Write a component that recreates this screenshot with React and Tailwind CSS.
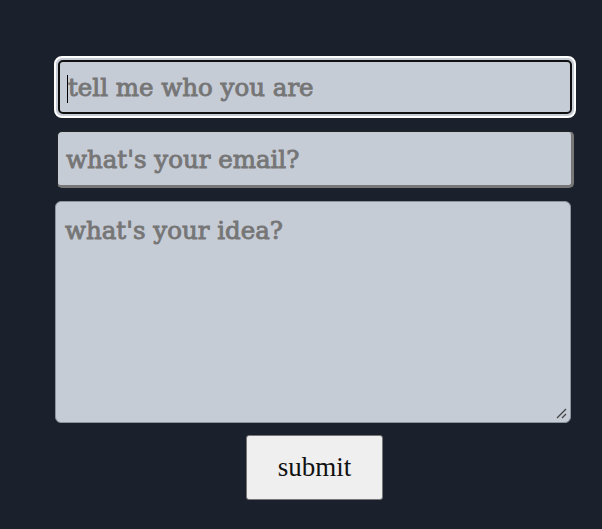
export default function App() {
  const ph = { WebkitTextStroke: '0.9px #767676' };
  return (
    <div className="min-h-[529px] bg-[#1a202c] pt-[56px] pl-[55px]" style={{ fontFamily: '"DejaVu Serif", serif' }}>
      <form className="w-[521px] flex flex-col items-center">
        <div className="self-start ml-[-1px] w-[522px] h-[62px] rounded-[8px] border-2 border-white p-[2px] bg-[#c6ccd6]">
          <div className="h-full rounded-[5px] border-2 border-[#101010] flex items-center pl-[7px] pt-[3px]">
            <span className="w-px h-[28px] bg-black" />
            <span className="text-[24.5px] text-[#767676]" style={ph}>tell me who you are</span>
          </div>
        </div>
        <div className="mt-[13px] self-start ml-[2px] w-[517px] h-[57px] rounded-[5px] bg-[#c6ccd6] border-t border-l border-t-[#222] border-l-[#222] border-b-[3px] border-r-[3px] border-b-[#777] border-r-[#777] flex items-center pl-[8px] pt-[4px]">
          <span className="text-[24.5px] text-[#767676]" style={ph}>what's your email?</span>
        </div>
        <div className="mt-[13px] self-start relative w-[516px] h-[222px] rounded-[6px] bg-[#c6ccd6] border border-[#8d939c] pt-[11px] pl-[9px]">
          <span className="text-[24.5px] text-[#767676]" style={ph}>what's your idea?</span>
          <svg className="absolute right-[3px] bottom-[3px]" width="12" height="12" viewBox="0 0 12 12">
            <path d="M2 11 L11 2 M7 11 L11 7" stroke="#444" strokeWidth="1.3" />
          </svg>
        </div>
        <button type="button" className="mt-[12px] ml-[-2px] w-[137px] h-[65px] rounded-[3px] bg-[#efefef] border border-[#767676] text-[27px] text-[#111]" style={{ fontFamily: '"Liberation Serif", serif' }}>
          submit
        </button>
      </form>
    </div>
  );
}
